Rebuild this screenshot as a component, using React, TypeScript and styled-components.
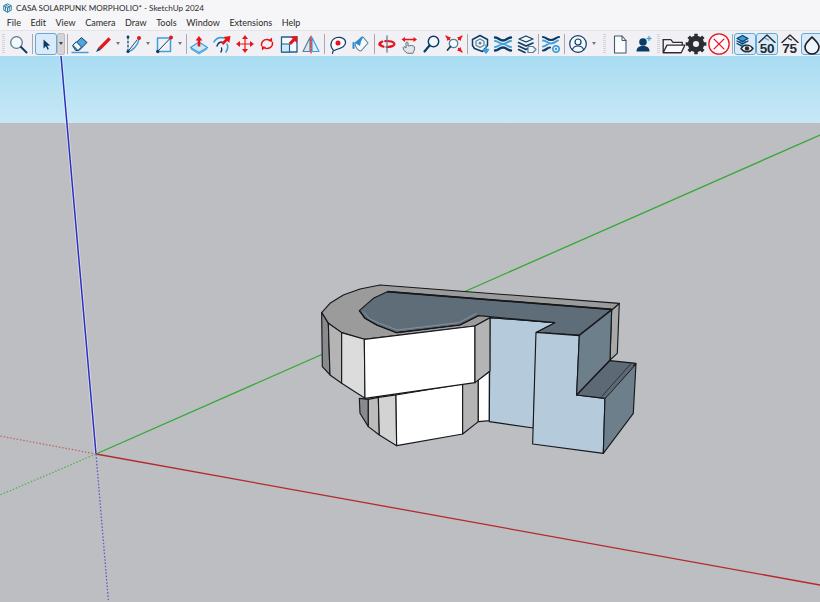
import React from "react";
import styled, { createGlobalStyle } from "styled-components";

const Global = createGlobalStyle`
  html, body { margin: 0; padding: 0; background: #bdbec2; overflow: hidden; }
  #root { width: 820px; height: 602px; }
`;

const Win = styled.div`
  width: 820px; height: 602px; display: flex; flex-direction: column; overflow: hidden;
  font-family: "Lato", "Noto Sans", sans-serif; color: #222;
`;
const TitleBar = styled.div`
  height: 15px; background: #f6f6f8; display: flex; align-items: center; gap: 4px; padding: 1px 0 0 3px; box-sizing: border-box;
`;
const TitleText = styled.span`font-size: 8.15px; line-height: 14px; white-space: nowrap; color: #2a2a2a;`;
const MenuBar = styled.div`
  height: 16px; background: #f6f6f8; display: flex; align-items: center; padding-left: 2px; box-sizing: border-box;
  border-bottom: 1px solid #e4e4e8;
`;
const MenuItem = styled.span`font-size: 9px; padding: 0 4.8px; white-space: nowrap; color: #2a2a2a;`;
const Toolbar = styled.div`
  height: 25px; background: #f1f1f5; display: flex; align-items: center;
`;
const Tool = styled.div<{ $w: number; $active?: boolean }>`
  width: ${p => p.$w}px; height: 22px; flex: none; display: flex; align-items: center; justify-content: center; box-sizing: border-box;
  ${p => p.$active ? "background:#d9ebf8; border:1.5px solid #63a9d8; border-radius:3px;" : ""}
  svg { flex: none; display: block; }
`;
const Sep = styled.div<{ $w: number }>`
  width: ${p => p.$w}px; flex: none; height: 20px; display: flex; justify-content: center;
  &::before { content: ""; width: 1px; height: 100%; background: #a9a9ad; }
`;
const Grip = styled.div<{ $w: number }>`
  width: ${p => p.$w}px; flex: none; height: 20px; display: flex; justify-content: center;
  &::before { content: ""; width: 3px; height: 100%; background: repeating-linear-gradient(#d4d4d8 0 1px, transparent 1px 2px); }
`;
const Caret = styled.div<{ $w: number }>`
  width: ${p => p.$w}px; flex: none; height: 22px; display: flex; align-items: center; justify-content: center;
  &::before { content: ""; border-left: 2.5px solid transparent; border-right: 2.5px solid transparent; border-top: 3px solid #77777b; }
`;
const DropCaret = styled(Caret)`
  background: #d4d4d6; border: 1px solid #bdbdc0; border-radius: 2px; box-sizing: border-box;
  &::before { border-top-color: #444; }
`;
const Viewport = styled.div`flex: 1; position: relative; display: flex; flex-direction: column;`;
const Sky = styled.div`height: 67px; background: linear-gradient(#a9dcf2, #c7e8f6);`;
const Ground = styled.div`flex: 1; background: #bdbec2;`;
const Scene = styled.svg`position: absolute; left: 0; top: 0; width: 820px; height: 546px;`;
const Badge = styled.div`display: flex; flex-direction: column; align-items: center; width: 20px;`;
const BadgeText = styled.span`font-family: "Liberation Sans", sans-serif; font-weight: 700; font-size: 13.5px; line-height: 10px; color: #1f2a33; letter-spacing: -0.2px; margin-top: 1px;`;

const N = "#0c3c66", B = "#3f9fdc", R = "#e8141c", D = "#2c2c34";
const I: React.FC<{ children: React.ReactNode; s?: number }> = ({ children, s = 22 }) => (
  <svg width={s} height={s} viewBox="0 0 22 22" fill="none" strokeLinecap="round" strokeLinejoin="round">{children}</svg>
);
const Roof: React.FC<{ accent: string }> = ({ accent }) => (
  <svg width="20" height="9" viewBox="0 0 20 9" fill="none" strokeLinecap="round" strokeLinejoin="round">
    <path d="M2 8.500L10 1l8 7.500" stroke={D} strokeWidth="1.500" />
    <path d="M8.500 4.500l3 1.500" stroke={accent} strokeWidth="1.300" />
  </svg>
);

const icons: Record<string, React.ReactNode> = {
  zoom: <I><circle cx="9.5" cy="9.5" r="5.8" fill="#f4f9fd" stroke="#5d7d94" strokeWidth="1.3" /><path d="M14 14l5.5 5.5" stroke={N} strokeWidth="2" /></I>,
  select: <I><path d="M8.5 6.5v9l2.4-2.2 1.7 3.4 1.3-.7-1.700-3.200 3-.3z" fill={N} /></I>,
  eraser: <I><path d="M4 12.5L12.5 4.500l5.500 5-8 8H7z" fill="#4fa6df" stroke={N} strokeWidth="1" /><path d="M4 12.500l5 5 3.500-3.500-5-5z" fill="#eaf4fb" stroke={N} strokeWidth="1" /><path d="M3 19.500h16" stroke={B} strokeWidth="1.300" /></I>,
  pencil: <I><path d="M6.200 14.700L16.500 4.200l2.400 2.400L8.600 17.100z" fill={R} /><path d="M6.200 14.700l2.400 2.400-4.600 1.900z" fill={N} /></I>,
  arc: <I><path d="M7 4v15" stroke={N} strokeWidth="1.200" strokeDasharray="2 2" /><path d="M7 18.500C12 18 17 12 18 6" stroke={B} strokeWidth="1.500" /><path d="M7 18.500L16 7" stroke={N} strokeWidth=".9" /><circle cx="18" cy="5" r="2" fill={R} /><circle cx="7" cy="4" r="1.400" fill={N} /><circle cx="7" cy="18.500" r="1.600" fill={N} /></I>,
  rect: <I><rect x="4.500" y="5" width="13" height="13.500" stroke={B} strokeWidth="1.500" /><path d="M5 18L17 5.500" stroke={N} strokeWidth="1" /><circle cx="18" cy="4.500" r="2" fill={R} /><circle cx="4.800" cy="18.500" r="1.700" fill={N} /></I>,
  push: <I><path d="M2.500 14.500L11 9l8.500 5.500L11 19.500z" fill="#cfe8f8" stroke={B} strokeWidth="1.300" /><path d="M3 16l8 5 8-5" stroke={B} strokeWidth="1" /><path d="M11 3l3.500 4.500h-2.200v6H9.700v-6H7.500z" fill={R} /></I>,
  follow: <I><path d="M3 9C5 5 9 4 13 5" stroke={B} strokeWidth="1.600" /><path d="M6 13c1-3 3-4 5-4" stroke={N} strokeWidth="1.400" /><path d="M15 19c2-3 2-6 1-8" stroke={B} strokeWidth="1.600" /><path d="M10 19c1-2 1-3 .5-4" stroke={N} strokeWidth="1.400" /><path d="M19.500 3l-1.200 7-2-2-4 4-2-2 4-4-2-2z" fill={R} /></I>,
  move: <I><path d="M11 5v12M5 11h12" stroke={R} strokeWidth="1.200" /><path d="M11 2l3 4H8zM11 20l3-4H8zM2 11l4-3v6zM20 11l-4-3v6z" fill={R} /></I>,
  rotate: <I><path d="M5.500 12.500c-.5-3.500 2-6 5.500-6 .9 0 1.700.2 2.400.6" stroke={R} strokeWidth="1.500" /><path d="M16.500 9.500c.5 3.500-2 6-5.500 6-.9 0-1.700-.2-2.400-.6" stroke={R} strokeWidth="1.500" /><path d="M16 4.500l.2 4.500-4.200-1zM6 17.500L5.800 13l4.200 1z" fill={R} /></I>,
  scale: <I><rect x="3.500" y="4" width="15.500" height="15" stroke="#1f5f8f" strokeWidth="1.300" fill="#f4f9fd" /><rect x="3.500" y="11" width="8" height="8" fill="#cfe8f8" stroke="#1f5f8f" strokeWidth="1.100" /><path d="M19.500 3l-.6 7-2-2-4 4-2.200-2.200 4-4-2-2z" fill={R} /></I>,
  section: <I><path d="M10 4.500L3 18.500h7z" stroke="#5d7d94" strokeWidth="1.200" fill="#dbe8f1" /><path d="M12 4.500l7 14h-7z" stroke={B} strokeWidth="1.200" fill="#dbeefa" /><path d="M11 3v17" stroke={R} strokeWidth="1.200" strokeDasharray="2 1.200" /></I>,
  tape: <I><path d="M6 16.500C2.500 13 3.500 6 10 4.500c5-1 9 2 8.500 5.500-.4 3-5 5.500-9 6.500L6 18l-.5 2.500" stroke={N} strokeWidth="1.200" fill="#fafcfe" /><circle cx="11" cy="10" r="2.500" fill={R} /></I>,
  paint: <I><path d="M5 10l8-6 5 6-7 8c-3 0-6-4-6-8z" fill="#f7fafd" stroke="#5d7d94" strokeWidth="1.100" /><path d="M5 10l6-6c1-1 2-.5 2 0l-2 4.500-1 4.500z" fill="#2e8bd2" /><path d="M3.500 10v5" stroke="#2e8bd2" strokeWidth="2" /></I>,
  orbit: <I><ellipse cx="11" cy="11" rx="7.500" ry="3" stroke={R} strokeWidth="2.200" strokeDasharray="9 3" /><path d="M11 3v16" stroke="#5d7d94" strokeWidth="1.300" /><path d="M2 12l3-3 1 4z" fill={R} /></I>,
  pan: <I><path d="M7 6.500h9" stroke={R} strokeWidth="1.500" /><path d="M3.500 6.500L7 4v5zM19 6.500L15.500 4v5z" fill={R} /><path d="M9 20c-2-1-3.500-3-4-5.500l1-1 2 1.500v-5c0-1.300 2-1.300 2 0V13c1.500-.5 6-1 6.500 1 .4 2-.5 4-1.500 6z" fill="#dfe6ec" stroke="#60707f" strokeWidth="1" /></I>,
  zoom2: <I><circle cx="12.500" cy="8.500" r="5.200" stroke={N} strokeWidth="1.500" fill="#f6f9fc" /><path d="M8.500 12.500L3.500 18.500" stroke={N} strokeWidth="2.200" /></I>,
  ext: <I><circle cx="10.500" cy="10.500" r="4.200" stroke="#5d7d94" strokeWidth="1.300" fill="#f8fafc" /><path d="M7.500 13.500L4.500 17" stroke={N} strokeWidth="1.800" /><path d="M3 3l5 1.500L4.500 8zM19 3l-5 1.500L17.500 8zM19 19l-5-1.500 3.500-3.500z" fill={R} /><path d="M3 3l3.500 3.500M19 3l-3.500 3.500M19 19l-3.500-3.500" stroke={R} strokeWidth="1.300" /></I>,
  hexa: <I><path d="M10 2.500l7.500 4v6l-5 6-8-3-2-3v-6z" stroke={N} strokeWidth="1.500" fill="#f2f7fb" /><path d="M10 6l4 2.200v4L10 14.500 6 12.200v-4z" stroke="#5d7d94" strokeWidth="1.200" /><circle cx="10" cy="10.200" r="1.400" fill="#5d7d94" /><path d="M16 12v5M13.500 16.500L16 20l2.500-3.500z" stroke={B} strokeWidth="1.500" fill={B} /></I>,
  wave: <I><path d="M3 4.500c4 0 4 3 8 3s4-3 8-3" stroke={N} strokeWidth="2.400" /><path d="M3 17.500c4 0 4-3 8-3s4 3 8 3" stroke={N} strokeWidth="2.400" /><path d="M3 8c3 0 5 3 8 3s5-3 8-3M3 14c3 0 5-3 8-3s5 3 8 3" stroke={B} strokeWidth="2" /></I>,
  stack: <I><path d="M4 6l7-3 7 3-7 3z" fill="#f2f7fb" stroke={N} strokeWidth="1.300" /><path d="M3.500 9.500L11 13l7-3M3.500 13l7.500 3.500 2-1" stroke={N} strokeWidth="1.600" /><path d="M3.500 16.500L10 19.500" stroke={N} strokeWidth="1.600" /><path d="M13 13.500h5l3 3-3 3h-5z" fill="#f2f7fb" stroke="#5d7d94" strokeWidth="1.200" /></I>,
  wavegear: <I><path d="M3 4c3 0 4 3 8 3s5-3 8-3" stroke={N} strokeWidth="2.200" /><path d="M3 17.500c3 0 4-3 7-3" stroke={N} strokeWidth="2.200" /><path d="M3 7.500c3 0 5 3 8 3s4-1.500 7-3M3 13.500c2 0 4-2 6-3" stroke={B} strokeWidth="1.900" /><circle cx="16" cy="16" r="3.200" stroke={B} strokeWidth="1.800" strokeDasharray="1.500 .8" /><circle cx="16" cy="16" r="1.200" fill={B} /></I>,
  user: <I><circle cx="11" cy="11" r="8.300" stroke={N} strokeWidth="1.200" fill="#f6f9fc" /><circle cx="11" cy="9" r="3" stroke={N} strokeWidth="1.200" /><path d="M5.500 16.500c1-3 3-3.500 5.500-3.500s4.500.5 5.500 3.500" stroke={N} strokeWidth="1.200" /></I>,
  doc: <I><path d="M5.500 3h7.500l4 4.500V20H5.500z" stroke="#3c5a74" strokeWidth="1.100" fill="#fbfcfe" /><path d="M13 3v4.500h4" stroke="#3c5a74" strokeWidth="1" /></I>,
  addUser: <I><circle cx="11" cy="9" r="3.800" fill={N} /><path d="M4.500 18.500c0-4 2.500-5.500 6.500-5.500s6.500 1.500 6.500 5.500z" fill={N} /><path d="M17 3.500v4M15 5.500h4" stroke="#3aa7e0" strokeWidth="1.300" /></I>,
  folder: <I s={24}><path d="M2 7h7l2 2.500h8.500V12" stroke={D} strokeWidth="1.200" fill="#fbfbfd" /><path d="M2 7v12h16.500L22 12H5.500L2 19" stroke={D} strokeWidth="1.200" fill="#fbfbfd" /></I>,
  gear: <I s={24}><circle cx="11" cy="11" r="5.500" stroke={D} strokeWidth="4" /><path d="M11 1.500v19M1.500 11h19M4.300 4.300l13.400 13.400M17.700 4.300L4.300 17.700" stroke={D} strokeWidth="3.200" strokeLinecap="butt" /><circle cx="11" cy="11" r="6" fill={D} /><circle cx="11" cy="11" r="2.800" fill="#f1f1f5" /></I>,
  close: <I s={24}><circle cx="11" cy="11" r="9.300" stroke={R} strokeWidth="1.200" fill="#fbfbfd" /><path d="M6.500 6.500l9 9M15.500 6.500l-9 9" stroke={R} strokeWidth="1.200" /></I>,
  eye: <I><path d="M3 5.500l5.500-3 5.500 3-5.500 3zM3 8l5.500 3 5.500-3M3 10.500l5.500 3 3-1.500" stroke={N} strokeWidth="1.300" fill="#3f9fdc" /><path d="M7 15.500c3-4.500 9-4.500 12 0-3 4.500-9 4.500-12 0z" stroke={D} strokeWidth="1.400" fill="#f5f8fb" /><circle cx="13" cy="15.500" r="2.200" fill={D} /></I>,
  h50: <Badge><Roof accent={B} /><BadgeText>50</BadgeText></Badge>,
  h75: <Badge><Roof accent={D} /><BadgeText>75</BadgeText></Badge>,
  drop: <I><path d="M11 4c3 3.500 7 6 7 10a7 7 0 0 1-14 0c0-4 4-6.500 7-10z" stroke="#1d1d22" strokeWidth="1.600" fill="#eef6fc" /></I>,
};

type Item = ["t", number, string, boolean?] | ["s" | "g" | "c" | "d", number];
const items: Item[] = [
  ["g", 7], ["t", 22, "zoom"], ["s", 6], ["t", 22, "select", true], ["d", 8], ["s", 4],
  ["t", 22, "eraser"], ["t", 24, "pencil"], ["c", 6], ["t", 22, "arc"], ["c", 10], ["t", 22, "rect"], ["c", 10], ["s", 3],
  ["t", 22, "push"], ["t", 24, "follow"], ["t", 21, "move"], ["t", 23, "rotate"], ["t", 22, "scale"], ["t", 22, "section"], ["s", 5],
  ["t", 22, "tape"], ["t", 23, "paint"], ["s", 4],
  ["t", 22, "orbit"], ["t", 22, "pan"], ["t", 23, "zoom2"], ["t", 22, "ext"], ["s", 5],
  ["t", 22, "hexa"], ["t", 22, "wave"], ["t", 23, "stack"], ["s", 3], ["t", 22, "wavegear"], ["s", 5],
  ["t", 22, "user"], ["c", 10], ["g", 10], ["t", 22, "doc"], ["t", 23, "addUser"], ["g", 8],
  ["t", 22, "folder"], ["t", 23, "gear"], ["t", 23, "close"], ["s", 4],
  ["t", 22, "eye", true], ["t", 22, "h50", true], ["t", 23, "h75"], ["t", 22, "drop", true],
];

const menu = ["File", "Edit", "View", "Camera", "Draw", "Tools", "Window", "Extensions", "Help"];

const Logo = () => (
  <svg width="9" height="10" viewBox="0 0 18 20" fill="none" strokeWidth="1.800" stroke="#17759a">
    <path d="M9 1.500L16.500 5.500v9L9 18.500 1.500 14.500v-9z" />
    <path d="M1.500 5.500L9 9.500l7.500-4M9 9.500v9M5 3.500l7.500 4v8M5 7.500v8" />
  </svg>
);

const poly = (points: string, fill: string) => <polygon points={points} fill={fill} />;

const Model = () => (
  <g transform="translate(310 270) scale(.3333)" stroke="#15181b" strokeWidth="3.400" strokeLinejoin="round">
    {poly("148,385 175,388 175,470 150,430", "#8a8a8c")}
    {poly("175,388 205,382 208,495 175,470", "#bcbcbc")}
    {poly("205,382 258,375 260,527 208,495", "#d3d3d3")}
    {poly("258,375 458,342 458,492 260,527", "#ffffff")}
    {poly("458,342 505,330 505,455 458,492", "#b4b4b4")}
    {poly("505,330 538,305 538,452 505,455", "#ffffff")}
    {poly("540,143 735,158 680,187 670,474 538,455", "#b5cbdc")}
    {poly("905,120 928,100 922,250 900,270", "#a9a9a9")}
    {poly("35,128 60,100 100,75 150,57 210,45 928,100 905,120 735,158 540,143 495,168 163,208 95,188 55,160", "#9b9b9b")}
    {poly("148,122 190,85 232,65 905,118 808,195 680,187 735,158 505,137 450,165 260,188 200,165 165,145", "#5f6d78")}
    <polyline points="232,65 905,118" fill="none" strokeWidth="5" />
    <polyline points="160,124 178,146 208,160 262,180 446,158 500,130" fill="none" stroke="#9aa3aa" strokeWidth="2" />
    <polyline points="148,122 165,145 200,165 260,188 450,165 505,137" fill="none" />
    {poly("35,128 55,160 60,315 37,290", "#8a8a8c")}
    {poly("55,160 95,188 95,340 60,315", "#b4b4b4")}
    {poly("95,188 163,208 165,385 95,340", "#dcdcdc")}
    {poly("163,208 495,168 495,338 165,385", "#ffffff")}
    {poly("495,168 540,143 540,303 495,338", "#b4b4b4")}
    {poly("678,187 808,197 800,375 885,385 880,550 668,522", "#b5cbdc")}
    {poly("808,197 905,120 900,270 800,375", "#6e7f8c")}
    {poly("800,375 900,272 978,280 885,385", "#5d6a75")}
    {poly("885,385 978,282 970,430 880,550", "#6e7f8c")}
    <path d="M875 380L962 282" fill="none" strokeWidth="2" />
    <path d="M885 383L970 288" fill="none" stroke="#8b97a1" strokeWidth="2" />
  </g>
);

const Axes = () => (
  <g fill="none" strokeWidth="1.300">
    <line x1="61" y1="56" x2="96" y2="454" stroke="#ffffff" strokeOpacity=".5" strokeWidth="3.200" />
    <line x1="61" y1="56" x2="96" y2="454" stroke="#2a2fc0" strokeWidth="1.500" />
    <line x1="96" y1="454" x2="820" y2="135" stroke="#35a835" />
    <line x1="96" y1="454" x2="820" y2="585" stroke="#b32a2a" />
    <line x1="96" y1="454" x2="108.500" y2="602" stroke="#5a5ac8" strokeDasharray="1.500 1.800" />
    <line x1="96" y1="454" x2="0" y2="495" stroke="#55b155" strokeDasharray="1.500 1.800" />
    <line x1="96" y1="454" x2="0" y2="436" stroke="#b96a6a" strokeDasharray="1.500 1.800" />
  </g>
);

export default function App() {
  return (
    <Win>
      <Global />
      <TitleBar>
        <Logo />
        <TitleText>CASA SOLARPUNK MORPHOLIO* - SketchUp 2024</TitleText>
      </TitleBar>
      <MenuBar>
        {menu.map(m => <MenuItem key={m}>{m}</MenuItem>)}
      </MenuBar>
      <Toolbar>
        {items.map((it, i) => {
          if (it[0] === "t") return <Tool key={i} $w={it[1]} $active={it[3]}>{icons[it[2]]}</Tool>;
          if (it[0] === "s") return <Sep key={i} $w={it[1]} />;
          if (it[0] === "g") return <Grip key={i} $w={it[1]} />;
          if (it[0] === "d") return <DropCaret key={i} $w={it[1]} />;
          return <Caret key={i} $w={it[1]} />;
        })}
      </Toolbar>
      <Viewport>
        <Sky />
        <Ground />
        <Scene viewBox="0 56 820 546">
          <Axes />
          <Model />
        </Scene>
      </Viewport>
    </Win>
  );
}
